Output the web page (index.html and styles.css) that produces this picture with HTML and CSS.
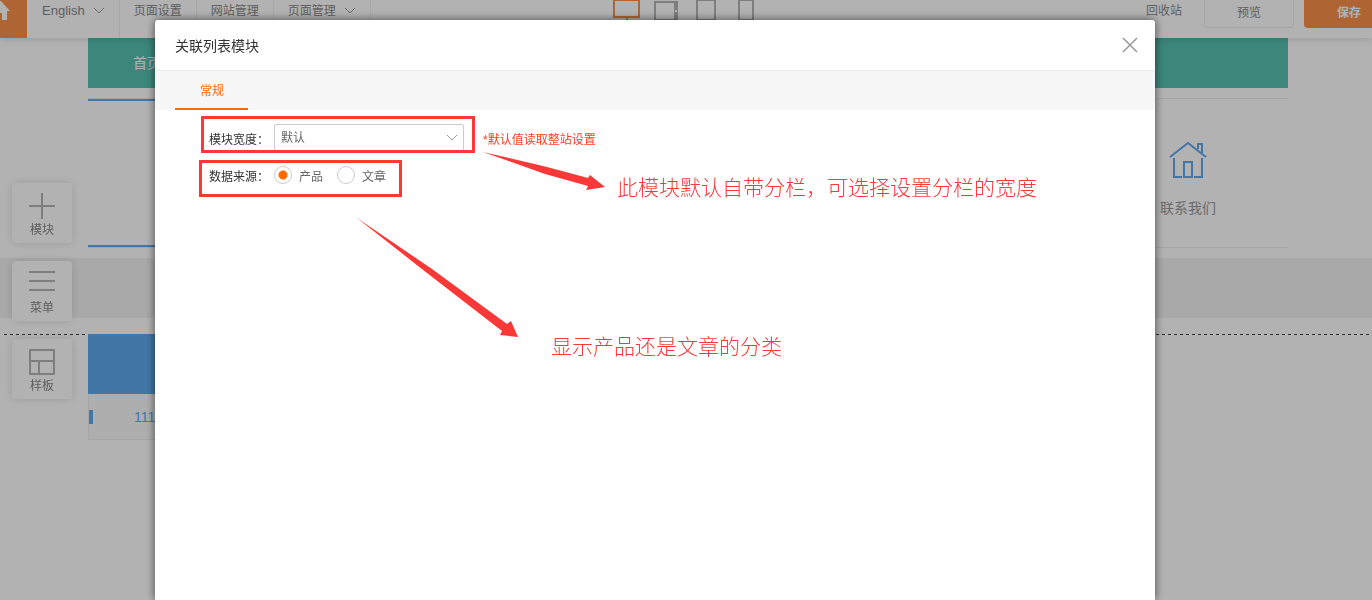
FILE: index.html
```
<!DOCTYPE html>
<html lang="zh-CN">
<head>
    <meta charset="UTF-8">
    <meta name="viewport" content="width=device-width, initial-scale=1.0">
    <title>关联列表模块</title>
    <link rel="stylesheet" href="styles.css">
</head>
<body>
    <header class="toolbar">
        <div class="toolbar-left">
            <a class="home" href="#" aria-label="Home">
                <svg width="27" height="38" viewBox="0 0 27 38"><path d="M0 1h1l9 10H7v9H2v-7H0z" fill="#fff"/></svg>
            </a>
            <button class="menu-item menu-lang" type="button">English
                <svg class="chevron" width="12" height="8" viewBox="0 0 12 8"><path d="M1 1l5 5 5-5"/></svg>
            </button>
            <button class="menu-item" type="button">页面设置</button>
            <button class="menu-item" type="button">网站管理</button>
            <button class="menu-item" type="button">页面管理
                <svg class="chevron" width="12" height="8" viewBox="0 0 12 8"><path d="M1 1l5 5 5-5"/></svg>
            </button>
        </div>
        <div class="devices">
            <button class="device active" type="button" aria-label="Desktop">
                <svg width="27" height="21" viewBox="0 0 27 21"><path d="M1 0v17h25V0M0 0h27M14 17v4"/></svg>
            </button>
            <button class="device" type="button" aria-label="Tablet landscape">
                <svg width="24" height="21" viewBox="0 0 24 21"><path d="M1 21V2h20v18H1"/><path d="M22 1v20" stroke-width="4"/><path d="M21 11h2" stroke="#fff"/></svg>
            </button>
            <button class="device" type="button" aria-label="Tablet">
                <svg width="20" height="21" viewBox="0 0 20 21"><path d="M1 0v20h18V0M0 0h20"/></svg>
            </button>
            <button class="device" type="button" aria-label="Phone">
                <svg width="16" height="21" viewBox="0 0 16 21"><path d="M1 0v20h14V0M0 0h16"/></svg>
            </button>
        </div>
        <div class="toolbar-right">
            <a class="recycle" href="#">回收站</a>
            <button class="btn-preview" type="button">预览</button>
            <button class="btn-save" type="button">保存</button>
        </div>
    </header>

    <main class="canvas">
        <nav class="container site-nav"><a href="#">首页</a></nav>
        <div class="container icon-grid">
            <div class="cell selected"></div>
            <div class="cell"></div>
            <div class="cell"></div>
            <div class="cell"></div>
            <div class="cell"></div>
            <div class="cell">
                <svg width="38" height="38" viewBox="0 0 38 38" fill="none" stroke="#5eaaf0" stroke-width="2">
                    <path d="M1 15L19 1l18 14"/>
                    <path d="M5 16v19h8M33 16v19h-8"/>
                    <path d="M15 36V20h8v16M14 35h10"/>
                    <path d="M29 7V2h4v9"/>
                </svg>
                <span>联系我们</span>
            </div>
        </div>
        <div class="band"></div>
        <section class="drop-area">
            <div class="container">
                <div class="category">
                    <div class="category-head"></div>
                    <a class="category-item" href="#">1111</a>
                </div>
            </div>
        </section>
    </main>

    <aside class="side-tools">
        <button type="button">
            <svg width="26" height="26" viewBox="0 0 26 26"><path d="M0 13h26M13 0v26"/></svg>
            模块
        </button>
        <button type="button">
            <svg width="26" height="26" viewBox="0 0 26 26"><path d="M0 1h26M0 10h26M0 19h26"/></svg>
            菜单
        </button>
        <button type="button">
            <svg width="26" height="26" viewBox="0 0 26 26"><path d="M1 1h24v24H1zM1 12h24M10 12v13"/></svg>
            样板
        </button>
    </aside>

    <div class="mask">
        <div class="dialog" role="dialog" aria-labelledby="dialog-title">
            <div class="dialog-head">
                <h1 id="dialog-title">关联列表模块</h1>
                <button class="close" type="button" aria-label="关闭">
                    <svg width="16" height="16" viewBox="0 0 16 16"><path d="M1 1l14 14M15 1L1 15"/></svg>
                </button>
            </div>
            <div class="tabs"><button class="tab" type="button">常规</button></div>
            <form class="settings">
                <div class="row">
                    <label class="row-label" for="width">模块宽度：</label>
                    <select id="width">
                        <option>默认</option>
                    </select>
                    <span class="hint">*默认值读取整站设置</span>
                </div>
                <div class="row" role="radiogroup" aria-labelledby="source-label">
                    <span class="row-label" id="source-label">数据来源：</span>
                    <label class="radio"><input type="radio" name="source" checked>产品</label>
                    <label class="radio"><input type="radio" name="source">文章</label>
                </div>
            </form>

            <!-- guide marks drawn over the form -->
            <svg class="marks" width="1000" height="580" viewBox="0 0 1000 580">
                <rect x="47.5" y="97.5" width="271" height="34"/>
                <rect x="45.5" y="141.5" width="200" height="34"/>
                <path d="M328 132l64 15 41 11 2-3 15 12-19 3 2-4-43-12z"/>
                <path d="M202 198l75 51 75 55 4-3 7 16-18-2 2-4-75-58z"/>
            </svg>
            <p class="note note-width">此模块默认自带分栏，可选择设置分栏的宽度</p>
            <p class="note note-source">显示产品还是文章的分类</p>
        </div>
    </div>
</body>
</html>
```
FILE: styles.css
```
* {
    box-sizing: border-box;
}
body {
    margin: 0;
    height: 100vh;
    overflow: hidden;
    background-color: #fff;
    color: #333;
    font-family: "Liberation Sans", "Noto Sans CJK SC", sans-serif;
    font-size: 12px;
}
button, select {
    font: inherit;
    color: inherit;
    background: none;
    border: 0;
    padding: 0;
}
a {
    color: inherit;
    text-decoration: none;
}
svg {
    display: block;
    flex: none;
}

/* toolbar */
.toolbar {
    position: relative;
    z-index: 1;
    display: grid;
    grid-template-columns: 1fr auto 1fr;
    height: 38px;
    background-color: #fff;
    color: #888;
    box-shadow: 0 1px 8px rgba(0, 0, 0, .15);
}
.toolbar-left, .toolbar-right, .devices {
    display: flex;
    align-items: flex-start;
}
.toolbar-right {
    justify-content: flex-end;
}
.home {
    margin-right: 1px;
    background-color: #fb904a;
}
.menu-item {
    display: flex;
    align-items: flex-start;
    gap: 8px;
    height: 38px;
    padding: 0 14px;
    line-height: 22px;
    border-right: 1px solid #f0f0f0;
}
.menu-lang {
    font-size: 13px;
}
.chevron {
    margin-top: 7px;
    fill: none;
    stroke: #999;
}
.device {
    display: flex;
    justify-content: center;
    width: 40px;
}
.device svg {
    fill: none;
    stroke: #b5b5b5;
    stroke-width: 2;
}
.device.active svg {
    stroke: #fb904a;
}
.recycle {
    margin-right: 22px;
    line-height: 22px;
}
.btn-preview {
    width: 90px;
    height: 28px;
    margin-right: 10px;
    padding-bottom: 4px;
    border: 1px solid #eee;
    border-top: 0;
    border-radius: 0 0 4px 4px;
}
.btn-save {
    height: 28px;
    padding: 0 11px 6px 33px;
    border-radius: 0 0 0 4px;
    background-color: #fb904a;
    color: #fff;
    font-weight: bold;
}

/* edited page */
.canvas {
    padding-left: 4px;
}
.container {
    max-width: 1200px;
    margin: 0 auto;
}
.site-nav {
    padding-left: 45px;
    background-color: #56c1b1;
    color: #fff;
    font-size: 14px;
    line-height: 50px;
}
.icon-grid {
    display: grid;
    grid-template-columns: repeat(6, 1fr);
    height: 150px;
    margin-top: 10px;
    border-top: 1px solid #eee;
    border-bottom: 1px solid #eee;
}
.cell {
    display: flex;
    flex-direction: column;
    align-items: center;
    gap: 18px;
    padding-top: 43px;
    color: #999;
    font-size: 14px;
    line-height: 20px;
}
.selected {
    border-top: 2px solid #5eaaf0;
    border-bottom: 2px solid #5eaaf0;
}
.band {
    height: 60px;
    margin: 10px 0 16px -4px;
    background-color: #f2f2f2;
}
.drop-area {
    background: repeating-linear-gradient(90deg, #444 0 3px, transparent 3px 6px) 0 0 / 100% 1px no-repeat;
}
.category {
    width: 240px;
}
.category-head {
    height: 60px;
    background-color: #5eaaf0;
}
.category-item {
    display: flex;
    align-items: center;
    gap: 41px;
    height: 46px;
    border: 1px solid #eee;
    border-top: 0;
    background-color: #f9f9f9;
    color: #5eaaf0;
    font-size: 14px;
}
.category-item::before {
    content: "";
    width: 4px;
    height: 14px;
    background-color: #5eaaf0;
}

/* floating tools */
.side-tools {
    position: fixed;
    top: 183px;
    left: 12px;
    display: flex;
    flex-direction: column;
    gap: 18px;
}
.side-tools button {
    display: flex;
    flex-direction: column;
    align-items: center;
    gap: 2px;
    width: 60px;
    height: 60px;
    padding-top: 10px;
    border-radius: 4px;
    background-color: #fff;
    color: #888;
    line-height: 18px;
    box-shadow: 0 0 10px rgba(0, 0, 0, .15);
}
.side-tools svg {
    fill: none;
    stroke: #b5b5b5;
    stroke-width: 2;
}

/* dialog */
.mask {
    position: fixed;
    inset: 0;
    z-index: 10;
    display: flex;
    padding: 20px 217px 0 155px;
    background-color: rgba(0, 0, 0, .3);
}
.dialog {
    position: relative;
    flex: 1;
    background-color: #fff;
    border-radius: 3px 3px 0 0;
    box-shadow: 0 0 10px rgba(0, 0, 0, .6);
}
.dialog-head {
    display: flex;
    align-items: center;
    justify-content: space-between;
    height: 51px;
    padding: 0 17px 0 20px;
    border-bottom: 1px solid #ebebeb;
}
.dialog-head h1 {
    margin: 0;
    font-size: 14px;
    font-weight: normal;
}
.close svg {
    fill: none;
    stroke: #999;
    stroke-width: 1.5;
}
.tabs {
    display: flex;
    height: 39px;
    padding-left: 20px;
    background-color: #f7f7f7;
}
.tab {
    padding: 0 24px 0 25px;
    border-bottom: 2px solid #ff6a00;
    color: #ff6a00;
}
.settings {
    display: flex;
    flex-direction: column;
    gap: 9px;
    padding: 14px 54px;
}
.row {
    display: flex;
    align-items: center;
    height: 28px;
}
.row-label {
    width: 65px;
}
.row select {
    width: 190px;
    height: 28px;
    padding: 0 6px;
    border: 1px solid #ccc;
    border-radius: 2px;
    color: #666;
    appearance: none;
    background: url("data:image/svg+xml,%3Csvg xmlns='http://www.w3.org/2000/svg' width='12' height='8' fill='none' stroke='%23999'%3E%3Cpath d='M1 1l5 5 5-5'/%3E%3C/svg%3E") right 5px center no-repeat;
}
.hint {
    margin-left: 19px;
    color: #ff3c1e;
}
.radio {
    display: flex;
    align-items: center;
    gap: 7px;
    margin-right: 14px;
    color: #666;
}
.radio input {
    width: 18px;
    height: 18px;
    margin: 0;
    appearance: none;
    border: 1px solid #ccc;
    border-radius: 50%;
}
.radio input:checked {
    background: radial-gradient(circle, #ff6a00 4px, transparent 5px);
}
.marks {
    position: absolute;
    top: 0;
    left: 0;
    pointer-events: none;
}
.marks rect {
    fill: none;
    stroke: #fb3838;
    stroke-width: 3;
}
.marks path {
    fill: #fb3838;
}
.note {
    position: absolute;
    margin: 0;
    color: #fb3838;
    font-size: 21px;
    font-weight: 300;
    line-height: 30px;
    white-space: nowrap;
}
.note-width {
    top: 153px;
    left: 462px;
}
.note-source {
    top: 312px;
    left: 396px;
}
```
